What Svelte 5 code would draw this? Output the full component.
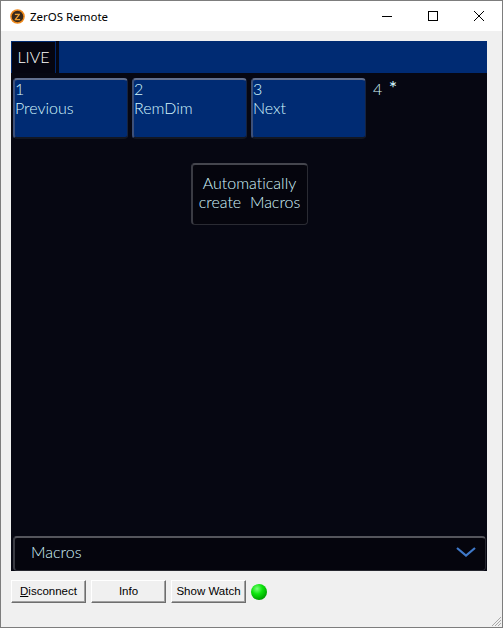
<script>
	const softkeys = [
		{ num: '1', label: 'Previous' },
		{ num: '2', label: 'RemDim' },
		{ num: '3', label: 'Next' }
	];
	const actions = ['Info', 'Show Watch'];
</script>

<div class="window">
	<header class="titlebar">
		<svg class="logo" width="15" height="15" viewBox="0 0 16 16">
			<circle cx="8" cy="8" r="7" fill="#3a2a1c" stroke="#f08a1c" stroke-width="1.6" />
			<path d="M5.2 5h5.4v1.2L7 10.6h3.8V12H5v-1.2l3.6-4.4H5.2z" fill="#f0a030" />
		</svg>
		<span class="title">ZerOS Remote</span>
		<div class="controls">
			<svg width="46" height="30" viewBox="0 0 46 30"><path d="M18 15.5h10" stroke="#000" fill="none" /></svg>
			<svg width="46" height="30" viewBox="0 0 46 30"><rect x="18.5" y="10.5" width="9" height="9" stroke="#000" fill="none" /></svg>
			<svg width="46" height="30" viewBox="0 0 46 30"><path d="M18 10l10 10M28 10L18 20" stroke="#000" fill="none" /></svg>
		</div>
	</header>

	<main class="client">
		<section class="panel">
			<div class="tabs">
				<div class="tab">LIVE</div>
				<div class="tabfill"></div>
			</div>

			<div class="keys">
				{#each softkeys as key}
					<div class="key">
						<span>{key.num}</span>
						<span>{key.label}</span>
					</div>
				{/each}
				<div class="spare">4 <span class="star">*</span></div>
			</div>

			<div class="center">
				<div class="auto">Automatically<br />create&nbsp; Macros</div>
			</div>

			<div class="selector">
				<span>Macros</span>
				<svg width="20" height="10" viewBox="0 0 20 10">
					<path d="M1 1l9 7.5L19 1" fill="none" stroke="#3f79c9" stroke-width="2.2" />
				</svg>
			</div>
		</section>

		<footer class="actions">
			<button><u>D</u>isconnect</button>
			{#each actions as action}
				<button>{action}</button>
			{/each}
			<div class="led"></div>
		</footer>
	</main>

	<svg class="grip" width="12" height="12" viewBox="0 0 12 12">
		<path d="M11 2L2 11M11 5L5 11M11 8L8 11" stroke="#a8a8a8" fill="none" />
	</svg>
</div>

<style>
	:global(body) {
		margin: 0;
		background: #f0f0f0;
	}

	.window {
		position: relative;
		box-sizing: border-box;
		width: 503px;
		height: 628px;
		display: flex;
		flex-direction: column;
		border: 1px solid #7d7d7d;
		background: #f0f0f0;
	}

	.titlebar {
		height: 30px;
		display: flex;
		align-items: center;
		padding-left: 9px;
		background: #fff;
		flex: none;
	}

	.logo {
		margin-right: 5px;
	}

	.title {
		font-family: "Noto Sans", sans-serif;
		font-size: 11.5px;
		color: #000;
	}

	.controls {
		display: flex;
		margin-left: auto;
	}

	.client {
		flex: 1;
		display: flex;
		flex-direction: column;
		padding: 10px 15px 0 10px;
	}

	.panel {
		box-sizing: border-box;
		height: 530px;
		display: flex;
		flex-direction: column;
		background: #060712;
		color: #d4f7ff;
		font-family: Lato, "Open Sans", sans-serif;
		font-size: 16px;
		font-weight: 300;
		font-variant-ligatures: none;
		line-height: 19px;
	}

	.tabs {
		display: flex;
		height: 32px;
		flex: none;
	}

	.tab {
		width: 45px;
		box-sizing: border-box;
		border: 1px solid #002a70;
		border-bottom: 0;
		background: #050510;
		color: #fff;
		text-align: center;
		line-height: 30px;
	}

	.tabfill {
		flex: 1;
		margin-left: 3px;
		background: #002b73;
	}

	.keys {
		display: flex;
		gap: 4px;
		padding: 5px 0 0 2px;
		flex: none;
	}

	.key {
		box-sizing: border-box;
		width: 115px;
		height: 61px;
		display: flex;
		flex-direction: column;
		background: #002b73;
		border: 1px solid #16233f;
		border-top: 2px solid #62708f;
		border-left: 2px solid #3d5079;
		border-bottom: 2px solid #131722;
		border-radius: 4px;
	}

	.key span:first-child {
		margin-top: -1px;
	}

	.spare {
		margin: 1px 0 0 3px;
		word-spacing: 2px;
	}

	.star {
		font-size: 20px;
		font-weight: 400;
		line-height: 0;
	}

	.center {
		flex: 1;
		display: flex;
		justify-content: center;
		align-items: flex-start;
		padding-top: 24px;
	}

	.auto {
		box-sizing: border-box;
		width: 117px;
		height: 62px;
		padding-top: 8px;
		text-align: center;
		background: #05050d;
		border: 1px solid #2a2b33;
		border-top: 2px solid #45464e;
		border-left: 2px solid #3a3b43;
		border-radius: 4px;
	}

	.selector {
		box-sizing: border-box;
		height: 35px;
		margin: 0 1px 0 2px;
		display: flex;
		align-items: center;
		justify-content: space-between;
		padding: 0 9px 5px 16px;
		background: #05050d;
		border: 1px solid #26272f;
		border-top: 2px solid #54555c;
		border-left: 2px solid #3a3b43;
		border-radius: 4px;
		flex: none;
	}

	.actions {
		display: flex;
		align-items: center;
		gap: 5px;
		margin-top: 9px;
	}

	button {
		box-sizing: border-box;
		width: 75px;
		height: 23px;
		padding: 0 0 2px;
		font-family: "Liberation Sans", sans-serif;
		font-size: 11.5px;
		color: #000;
		background: #f0f0f0;
		border: 1px solid;
		border-color: #fff #6e6e6e #6e6e6e #fff;
		box-shadow: inset -1px -1px 0 #a0a0a0;
	}

	.led {
		width: 16px;
		height: 16px;
		border-radius: 50%;
		background: radial-gradient(circle at 38% 30%, #7dff7d 0, #0ee60e 35%, #00a800 70%, #006000 100%);
	}

	.grip {
		position: absolute;
		right: 0;
		bottom: 0;
	}
</style>
